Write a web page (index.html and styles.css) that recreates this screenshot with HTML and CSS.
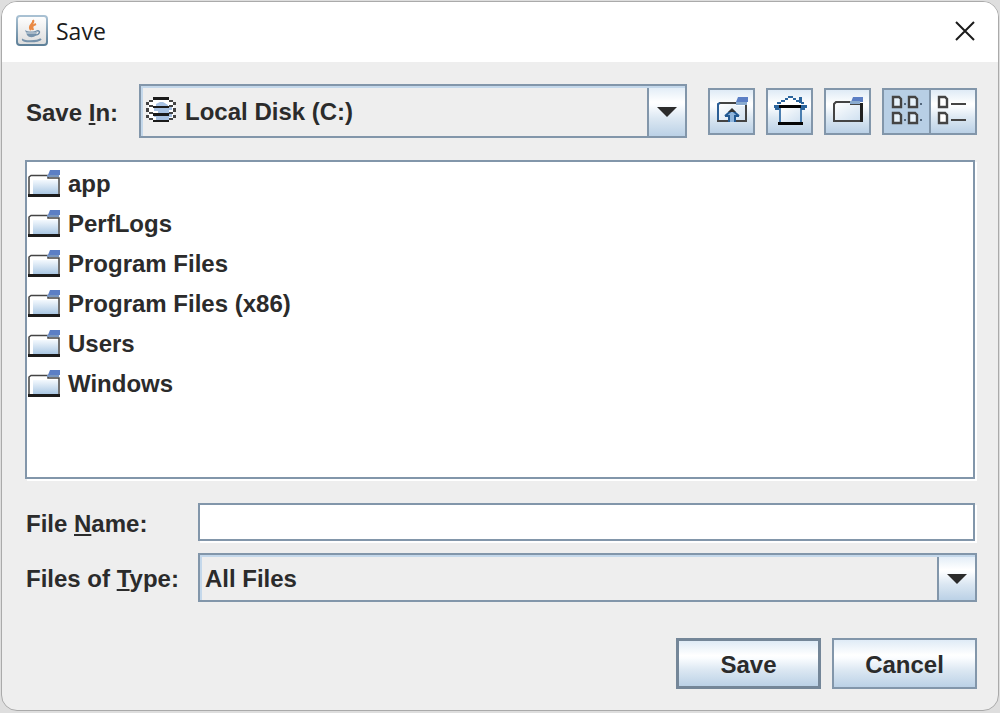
FILE: index.html
```html
<!DOCTYPE html>
<html lang="en">
<head>
<meta charset="utf-8">
<title>Save</title>
<link rel="stylesheet" href="styles.css">
</head>
<body>
<svg class="defs" aria-hidden="true">
  <defs>
    <linearGradient id="blue" x1="0" y1="0" x2="0" y2="1"><stop offset="0" stop-color="#f4f9fe"/><stop offset="1" stop-color="#abc8e4"/></linearGradient>
    <linearGradient id="pale" x1="0" y1="0" x2="1" y2="1"><stop offset="0" stop-color="#fff"/><stop offset="1" stop-color="#cfe0f0"/></linearGradient>
    <linearGradient id="tile" x1="0" y1="0" x2="0" y2="1"><stop offset="0" stop-color="#fff"/><stop offset="1" stop-color="#dcdcdc"/></linearGradient>
    <linearGradient id="edge" x1="0" y1="0" x2="0" y2="1"><stop offset="0" stop-color="#a9c1d3"/><stop offset="1" stop-color="#5d7f98"/></linearGradient>
    <symbol id="folder" viewBox="0 0 32 28">
      <path d="M1 7h18l2 2h10v16H1z" fill="#fff"/>
      <path d="M5 10h25v14H5z" fill="url(#blue)"/>
      <path d="M1 25V7l2-1.500h17V8h11v17" fill="none" stroke="#444" stroke-width="1.500"/>
      <path d="M0 24h32v3H0z" fill="#1c1c1c"/>
      <path d="M22 0h10v5H20z" fill="#5c7fc5"/><path d="M19 5h12v2H19z" fill="#7896c0"/>
    </symbol>
  </defs>
</svg>
<main class="dialog">
  <header class="titlebar">
    <svg class="java" viewBox="0 0 32 32" aria-hidden="true">
      <rect x="1" y="1" width="30" height="29" rx="3" fill="url(#tile)" stroke="url(#edge)" stroke-width="2"/>
      <path d="M17 5c2 4-6 5-2 10M20 9c-5 2-4 3-3 6" fill="none" stroke="#ea8a45" stroke-width="2.200"/>
      <path d="M9 15c3 2 9 2 12 0l-1 5c-2 3-7 3-9 0z" fill="#7692ab"/>
      <path d="M10 18h10" stroke="#d5dde4" stroke-width="1"/>
      <path d="M21 16c4-1 3 4-2 4" fill="none" stroke="#6d8ba6" stroke-width="1.500"/>
      <path d="M7 24c-2 3 15 3 18 0" fill="none" stroke="#7692ab" stroke-width="2"/>
    </svg>
    <h1 class="title">Save</h1>
    <button class="close" type="button" aria-label="Close"><svg viewBox="0 0 20 20"><path d="M1 1l18 18M19 1L1 19"/></svg></button>
  </header>
  <form class="content">
    <div class="toolbar">
      <label for="location">Save <u>I</u>n:</label>
      <div class="combo combo-location">
        <select id="location"><option>Local Disk (C:)</option></select>
        <svg class="disk" viewBox="0 0 30 26" aria-hidden="true">
          <path d="M7 2h16l5 4v14l-5 4H7l-5-4V6z" fill="#fff"/>
          <path d="M10 7l4-2h3l5 3v2h4v3h-3v4h3v3h-3v3H10v-3H8v-3h4v-3H8v-3h2z" fill="#a7c1e2"/>
          <path d="M7 0h16v3H7zM7 9h16v2H7zM7 16h16v3H7zM7 23h16v2H7z" fill="#1a1a1a"/>
          <path d="M3 3h4v2H3zM0 5h3v3H0zM3 8h4v2H3zM0 11h3v4H0zM3 15h4v2H3zM0 18h3v3H0zM3 21h4v2H3zM23 3h4v2h-4zM27 5h3v3h-3zM23 8h4v2h-4zM27 11h3v4h-3zM23 15h4v2h-4zM27 18h3v3h-3zM23 21h4v2h-4z" fill="#444"/>
        </svg>
        <svg class="arrow" viewBox="0 0 20 10" aria-hidden="true"><path d="M0 0h20L10 10z"/></svg>
      </div>
      <div class="tools">
        <button class="tool" type="button" aria-label="Up one level">
          <svg viewBox="0 0 32 32">
            <path d="M2 8h18v2h10v16H2z" fill="url(#pale)"/>
            <path d="M3 7h17" stroke="#444" stroke-width="2"/><path d="M2 25V8l2-1" fill="none" stroke="#2c5f96" stroke-width="2"/>
            <path d="M1 25h29V8" fill="none" stroke="#444" stroke-width="2"/>
            <path d="M22 1h10v5H20z" fill="#5c7fc5"/><path d="M20 6h11v3H20z" fill="#8aabd0"/>
            <path d="M16 14l7 6h-4v6h-6v-6H9z" fill="#8fb5dc"/>
            <path d="M9 20h4v6M23 20h-4v6M9 20l7-6 7 6" fill="none" stroke="#225891" stroke-width="2"/>
            <path d="M12 16l4-4 4 4z" fill="#333"/>
          </svg>
        </button>
        <button class="tool" type="button" aria-label="Home">
          <svg viewBox="0 0 32 32">
            <path d="M5 12h22v15H5z" fill="url(#pale)"/><path d="M2 10L15 1l7 2 8 7z" fill="#fff"/>
            <path d="M6 12v15M27 12v15" stroke="#4b7eb0" stroke-width="2"/>
            <path d="M5 9h22v3H5zM4 26h25v3H4z" fill="#050505"/>
            <path d="M0 9h5v3H0zM27 9h6v3h-6zM1 12h4v2H1zM27 12h4v2h-4zM3 6h4v2H3zM7 4h4v2H7zM11 2h3v2h-3zM14 0h5v2h-5zM19 2h3v2h-3zM22 4h3v2h-3zM25 1h3v6h-3zM27 6h3v2h-3z" fill="#2c659d"/>
          </svg>
        </button>
        <button class="tool" type="button" aria-label="Create new folder">
          <svg viewBox="0 0 32 32">
            <path d="M2 7h18v2h10v15H2z" fill="url(#pale)"/>
            <path d="M29 25H2V8l2-2h15v2h10" fill="none" stroke="#444" stroke-width="2"/>
            <path d="M28 7h3v19h-3z" fill="#222"/><path d="M21 1h10v5H19z" fill="#5c7fc5"/><path d="M18 5h10v3H18z" fill="#8aabd0"/>
          </svg>
        </button>
        <div class="views">
          <button class="tool active" type="button" aria-label="List" aria-pressed="true">
            <svg viewBox="0 0 32 32">
              <path d="M2 1h6l2 2v8H2zM18 1h6l2 2v8h-8zM2 17h6l2 2v8H2zM18 17h6l2 2v8h-8z" fill="#e7f2fb" stroke="#444" stroke-width="2.400"/>
              <path d="M13 7h2v2h-2zM29 7h2v2h-2zM13 23h2v2h-2zM29 23h2v2h-2z" fill="#53677c"/>
            </svg>
          </button>
          <button class="tool" type="button" aria-label="Details" aria-pressed="false">
            <svg viewBox="0 0 32 32">
              <path d="M2 1h6l2 2v8H2zM2 17h6l2 2v8H2z" fill="#fff" stroke="#444" stroke-width="2.400"/>
              <path d="M14 7h15v2H14zM14 23h15v2H14z" fill="#444"/>
            </svg>
          </button>
        </div>
      </div>
    </div>
    <ul class="files">
      <li><svg class="folder"><use href="#folder"/></svg>app</li>
      <li><svg class="folder"><use href="#folder"/></svg>PerfLogs</li>
      <li><svg class="folder"><use href="#folder"/></svg>Program Files</li>
      <li><svg class="folder"><use href="#folder"/></svg>Program Files (x86)</li>
      <li><svg class="folder"><use href="#folder"/></svg>Users</li>
      <li><svg class="folder"><use href="#folder"/></svg>Windows</li>
    </ul>
    <div class="fields">
      <label for="name">File <u>N</u>ame:</label>
      <input id="name" class="name" type="text">
      <label for="type">Files of <u>T</u>ype:</label>
      <div class="combo combo-type">
        <select id="type"><option>All Files</option></select>
        <svg class="arrow" viewBox="0 0 20 10" aria-hidden="true"><path d="M0 0h20L10 10z"/></svg>
      </div>
    </div>
    <div class="actions">
      <button class="action default" type="submit">Save</button>
      <button class="action" type="button">Cancel</button>
    </div>
  </form>
</main>
</body>
</html>
```
FILE: styles.css
```css
* { box-sizing: border-box; }

:root {
  --line: #8296aa;
  --face: linear-gradient(#dfebf6 0%, #fff 32%, #fbfdff 38%, #dbe7f2 65%, #bbd1e6 100%);
}

body {
  margin: 0;
  padding: 1px 1px 2px;
  min-height: 100vh;
  display: flex;
  background: #dedede;
  color: #2b2b2b;
  font: bold 24px/28px "Liberation Sans", Arial, sans-serif;
}

button, select, input { font: inherit; color: inherit; border-radius: 0; margin: 0; }
svg { display: block; }
.defs { position: absolute; width: 0; height: 0; }

.dialog {
  flex: 1;
  min-width: 0;
  display: flex;
  flex-direction: column;
  background: #eee;
  border: 1px solid #aaa;
  border-radius: 16px;
  overflow: hidden;
}

.titlebar {
  height: 60px;
  display: flex;
  align-items: center;
  gap: 8px;
  padding: 0 21px 2px 14px;
  background: #fff;
}
.java { width: 32px; height: 32px; }
.title { flex: 1; margin: 0; font: 23px/30px "Open Sans", "Noto Sans", sans-serif; color: #1b1b1b; }
.close { padding: 2px; border: 0; background: none; }
.close svg { width: 20px; height: 20px; fill: none; stroke: #1b1b1b; stroke-width: 2; }

.content {
  flex: 1;
  display: flex;
  flex-direction: column;
  padding: 22px 21px 21px;
}

label { padding-top: 3px; }
u { text-decoration-thickness: 2px; text-underline-offset: 2px; text-decoration-skip-ink: none; }

.toolbar { display: flex; align-items: center; gap: 21px; padding-left: 3px; }
.combo { position: relative; flex: 1; min-width: 0; }
.combo select {
  display: block;
  width: 100%;
  height: 54px;
  appearance: none;
  border: 2px solid var(--line);
  padding: 2px 40px 0 44px;
  background:
    linear-gradient(var(--line), var(--line)) right 36px top / 2px 100% no-repeat,
    var(--face) right / 36px 100% no-repeat,
    #eee;
  box-shadow: inset 2px 2px #c4d8eb;
}
.combo-type select { height: 49px; padding-left: 5px; }
.disk { position: absolute; left: 7px; top: 13px; width: 30px; height: 26px; pointer-events: none; }
.arrow { position: absolute; right: 10px; top: 50%; margin-top: -4px; width: 20px; height: 10px; fill: #2b2b2b; pointer-events: none; }

.tools { display: flex; gap: 11px; }
.views { display: flex; }
.tool {
  width: 47px;
  height: 47px;
  display: grid;
  place-items: center;
  padding: 2px 0 0;
  border: 2px solid var(--line);
  background: var(--face);
}
.tool svg { width: 32px; height: 32px; overflow: visible; }
.views .tool { width: 49px; }
.views .tool + .tool { width: 48px; margin-left: -2px; }
.tool.active { background: #b8cfe5; }

.files {
  flex: 1;
  list-style: none;
  margin: 22px 2px 0 2px;
  padding: 2px 1px;
  background: #fff;
  border: 2px solid var(--line);
  box-shadow: 2px 2px #fff;
}
.files li { display: flex; align-items: center; gap: 8px; height: 40px; }
.folder { width: 32px; height: 28px; }

.fields {
  display: grid;
  grid-template-columns: auto 1fr;
  align-items: center;
  gap: 12px 19px;
  margin-top: 24px;
  padding-left: 3px;
}
.name {
  width: auto;
  min-width: 0;
  height: 38px;
  margin-right: 2px;
  padding: 0 4px;
  border: 2px solid var(--line);
  background: #fff;
  box-shadow: 2px 2px #fff;
}

.actions { display: flex; justify-content: flex-end; gap: 11px; margin-top: 36px; }
.action {
  width: 145px;
  height: 51px;
  padding: 2px 0 0;
  border: 2px solid var(--line);
  background: var(--face);
}
.action.default { border: 3px solid #748698; }
```
